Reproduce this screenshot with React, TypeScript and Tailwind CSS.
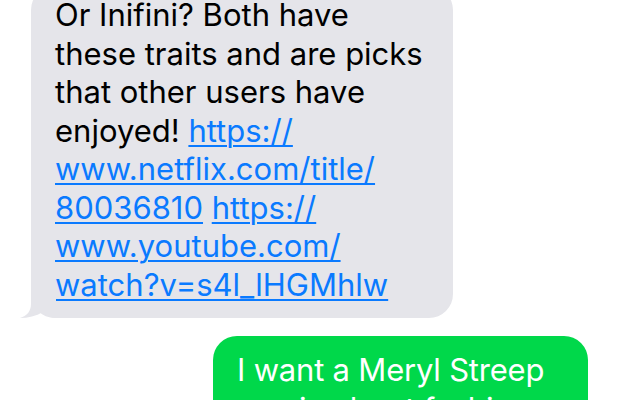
export default function App() {
  const link = "text-[#0a7aff] underline decoration-[1.5px] underline-offset-[3px]"

  return (
    <div className="h-[400px] w-[620px] overflow-hidden bg-white font-['Inter',sans-serif] text-[31px] leading-[38.5px]">
      <div className="flex flex-col">
        {/* incoming bubble */}
        <div className="relative ml-[31px] mt-[-14px] w-[422px] rounded-[24px] bg-[#e5e5ea] pb-[14px] pl-[24px] pt-[10px] text-black">
          <div className="whitespace-nowrap">Or Inifini? Both have</div>
          <div className="whitespace-nowrap">these traits and are picks</div>
          <div className="whitespace-nowrap">that other users have</div>
          <div className="whitespace-nowrap">
            enjoyed! <span className={link}>https://</span>
          </div>
          <div className="whitespace-nowrap">
            <span className={link}>www.netflix.com/title/</span>
          </div>
          <div className="whitespace-nowrap">
            <span className={link}>80036810</span> <span className={link}>https://</span>
          </div>
          <div className="whitespace-nowrap">
            <span className={link}>www.youtube.com/</span>
          </div>
          <div className="whitespace-nowrap">
            <span className={link}>watch?v=s4l_lHGMhlw</span>
          </div>
          <svg className="absolute bottom-0 left-[-13px]" width="40" height="30" viewBox="18 288 40 30">
            <path
              d="M31 290 L31 304 C31 311 27 316 20 318 C28 318 36 316 43 312 C47 316 51 318 56 318 L56 290 Z"
              fill="#e5e5ea"
            />
          </svg>
        </div>

        {/* outgoing bubble */}
        <div className="ml-[213px] mt-[18px] w-[375px] rounded-[24px] bg-[#00d84a] pb-[14px] pl-[24px] pt-[15px] text-white tracking-[-0.2px]">
          <div className="whitespace-nowrap">I want a Meryl Streep</div>
          <div className="whitespace-nowrap">movie about fashion</div>
        </div>
      </div>
    </div>
  )
}
